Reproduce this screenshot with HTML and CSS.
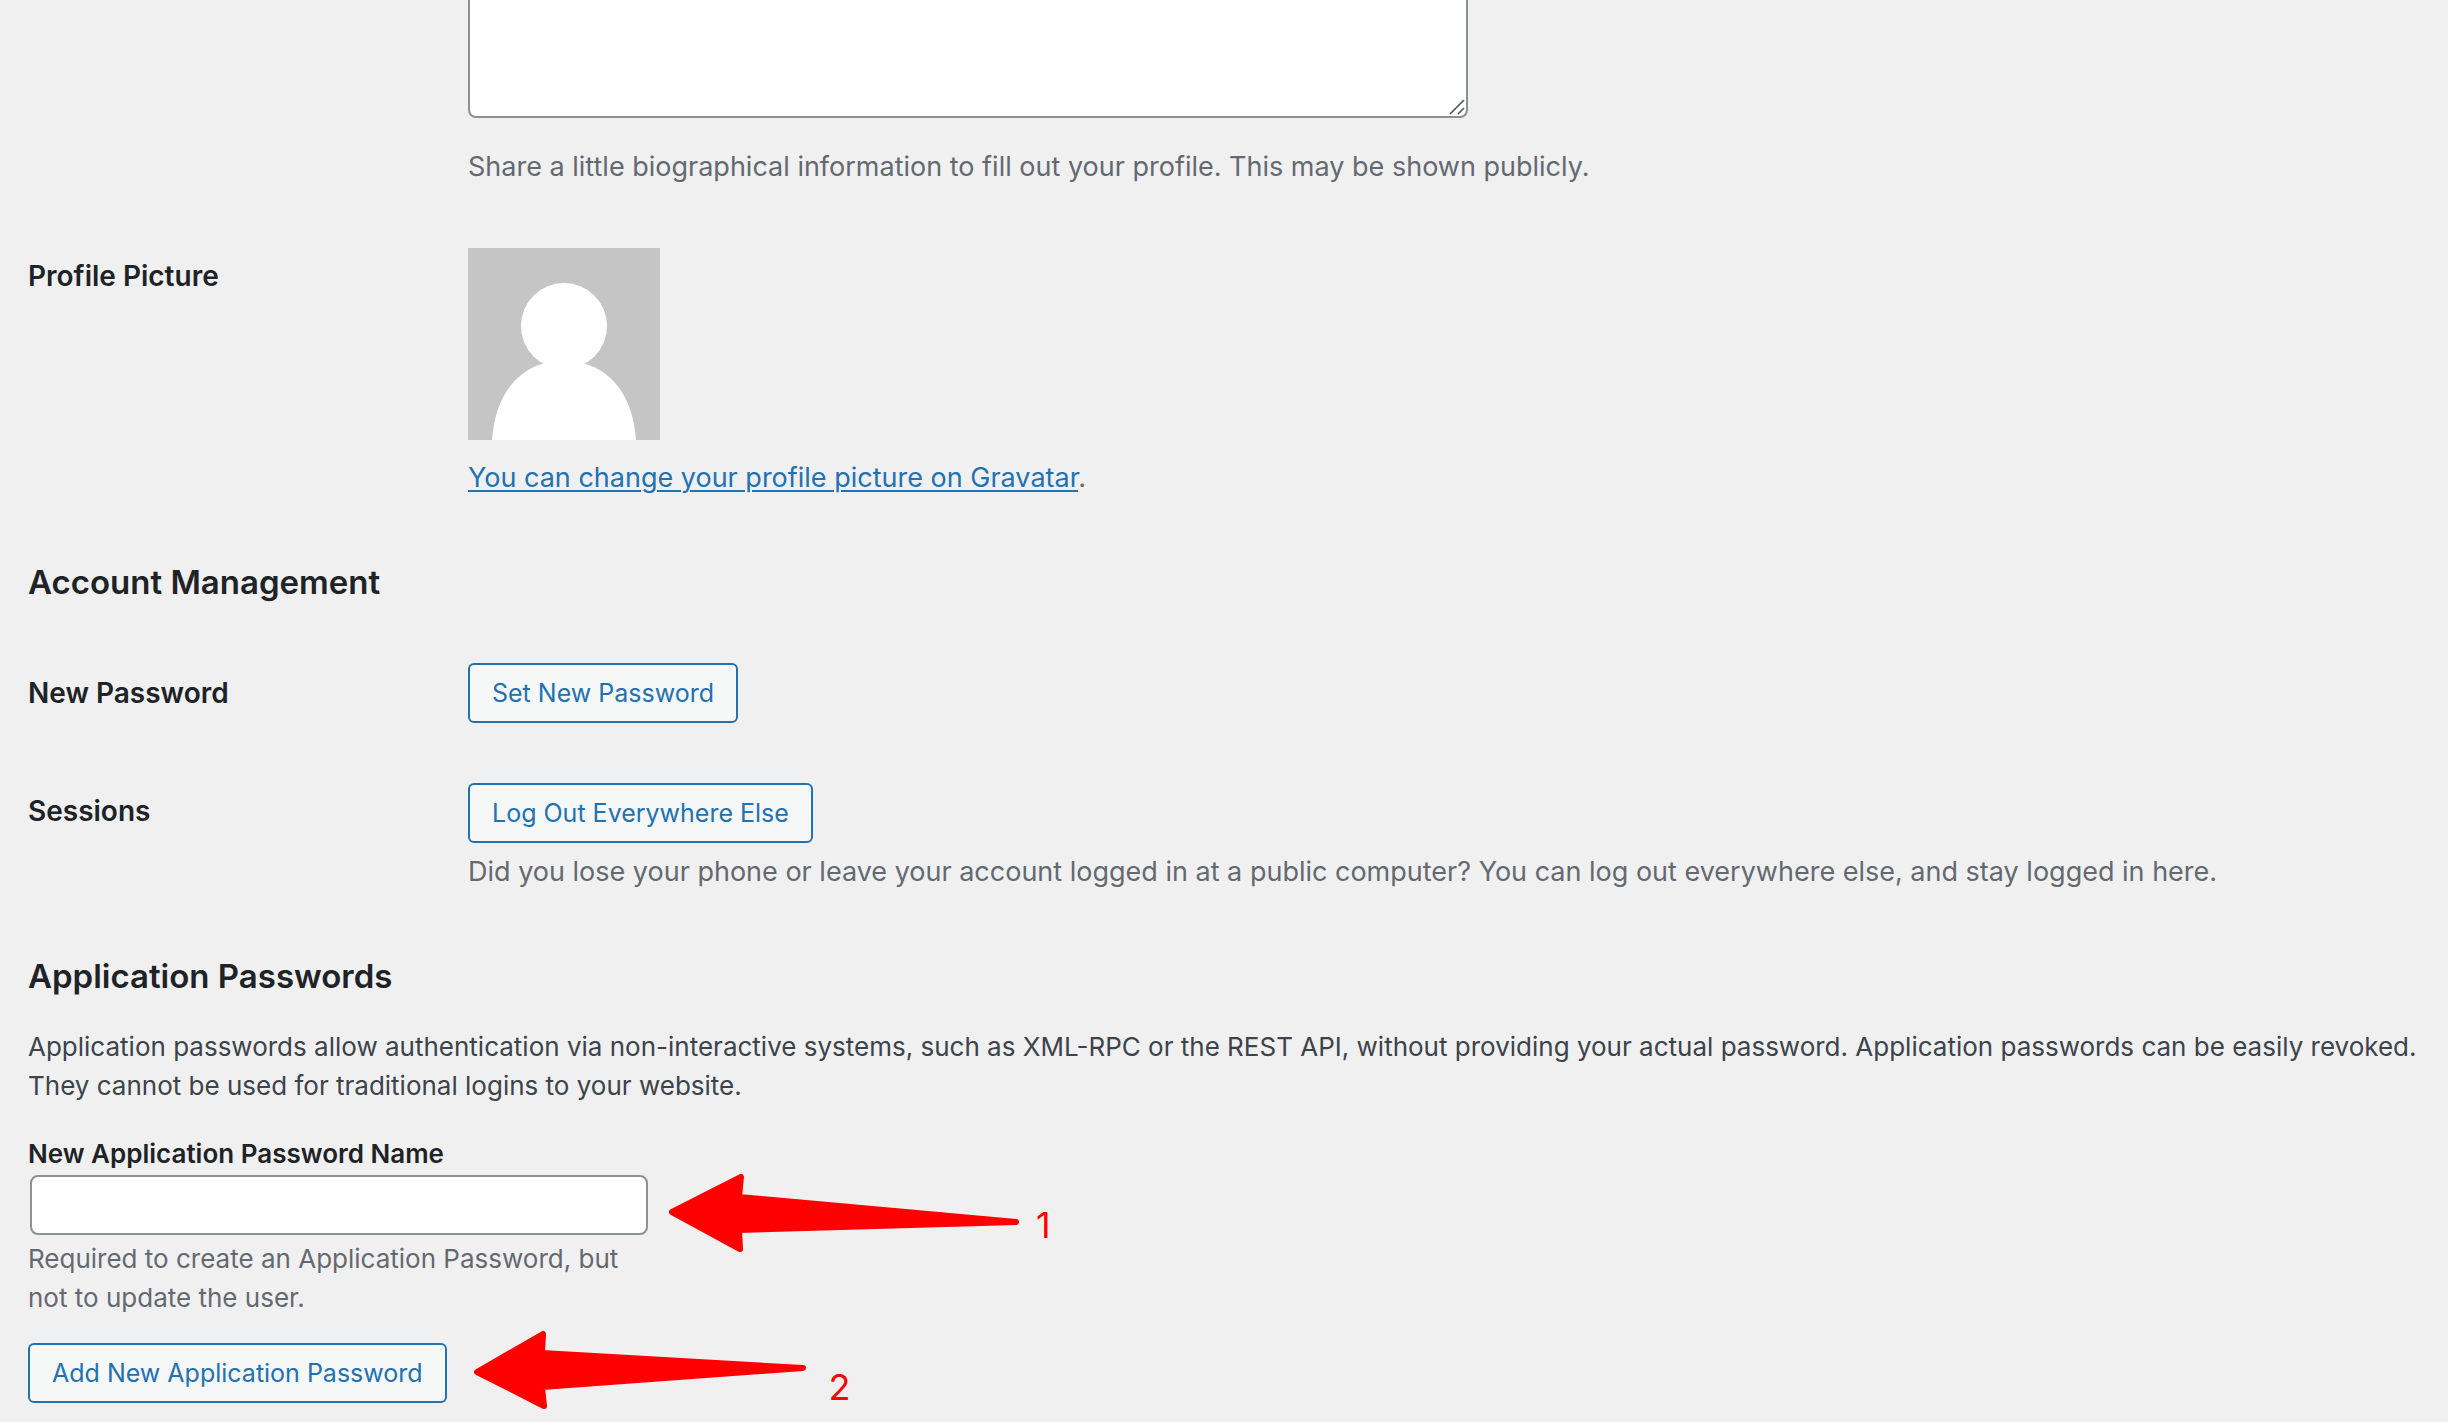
FILE: index.html
```html
<!DOCTYPE html>
<html lang="en">
<head>
<meta charset="utf-8">
<title>Profile</title>
<link rel="stylesheet" href="styles.css">
</head>
<body>
<form class="profile">
  <div class="row">
    <div></div>
    <div class="field">
      <div class="bio">
        <textarea class="bio-input" aria-label="Biographical Info"></textarea>
        <svg class="grip" viewBox="0 0 16 16" aria-hidden="true"><path d="M1 15 15 1M9 15l6-6" fill="none" stroke="#555" stroke-width="1.6"/></svg>
      </div>
      <p class="description bio-note">Share a little biographical information to fill out your profile. This may be shown publicly.</p>
    </div>
  </div>
  <div class="row">
    <div class="row-label">Profile Picture</div>
    <div class="field">
      <svg class="avatar" viewBox="0 0 192 192" role="img" aria-label="Avatar">
        <rect width="192" height="192" fill="#c5c5c5"/>
        <circle cx="96" cy="78" r="43" fill="#fff"/>
        <path d="M24 192C27 148 50 113 96 113s69 35 72 79z" fill="#fff"/>
      </svg>
      <p class="description avatar-note"><a href="#">You can change your profile picture on Gravatar</a>.</p>
    </div>
  </div>

  <h2>Account Management</h2>
  <div class="row row-center">
    <div class="row-label">New Password</div>
    <div class="field"><button type="button" class="button">Set New Password</button></div>
  </div>
  <div class="row">
    <div class="row-label">Sessions</div>
    <div class="field">
      <button type="button" class="button">Log Out Everywhere Else</button>
      <p class="description session-note">Did you lose your phone or leave your account logged in at a public computer? You can log out everywhere else, and stay logged in here.</p>
    </div>
  </div>

  <h2>Application Passwords</h2>
  <p class="intro">Application passwords allow authentication via non-interactive systems, such as XML-RPC or the REST API, without providing your actual password. Application passwords can be easily revoked. They cannot be used for traditional logins to your website.</p>
  <div class="app-field">
    <label for="app-name">New Application Password Name</label>
    <div class="anchor">
      <input type="text" id="app-name" class="text-input" aria-describedby="app-name-note">
      <div class="marker marker-name">
        <svg width="354" height="82" viewBox="0 0 354 82" aria-hidden="true"><path d="M4 39 73 4 71 24 348 49 71 57 72 76z"/></svg>
        <span class="marker-number">1</span>
      </div>
    </div>
    <p id="app-name-note" class="app-note">Required to create an Application Password, but not to update the user.</p>
  </div>
  <div class="anchor">
    <button type="button" class="button">Add New Application Password</button>
    <div class="marker marker-add">
      <svg width="344" height="82" viewBox="0 0 344 82" aria-hidden="true"><path d="M6 43 72 5 71 24 332 39 71 58 73 77z"/></svg>
      <span class="marker-number">2</span>
    </div>
  </div>
</form>
</body>
</html>
```

FILE: styles.css
```css
* {
  box-sizing: border-box;
}

body {
  margin: 0;
  background: #f0f0f1;
  color: #3c434a;
  font: 26px/39px Inter, "Liberation Sans", sans-serif;
}

p,
h2 {
  margin: 0;
}

a {
  color: #2271b1;
  text-decoration-thickness: 2px;
  text-underline-offset: 3px;
}

.profile {
  padding: 0 28px 19px;
}

.row {
  display: grid;
  grid-template-columns: 440px 1fr;
  margin-bottom: 60px;
}

.row-label {
  padding-top: 10px;
  color: #1d2327;
  font-size: 28px;
  font-weight: 600;
  line-height: 36px;
}

.row-center {
  align-items: center;
}

.row-center .row-label {
  padding-top: 0;
}

.description {
  color: #646970;
  font-size: 27px;
  line-height: 42px;
}

.bio {
  position: relative;
  max-width: 1000px;
}

.bio-input {
  display: block;
  width: 100%;
  height: 118px;
  padding: 4px 12px;
  border: 2px solid #8c8f94;
  border-top: 0;
  border-radius: 0 0 8px 8px;
  background: #fff;
  font: inherit;
  resize: none;
}

.grip {
  position: absolute;
  right: 3px;
  bottom: 3px;
  width: 16px;
  height: 16px;
}

.bio-note {
  margin-top: 28px;
}

.avatar {
  display: block;
  width: 192px;
  height: 192px;
}

.avatar-note {
  margin-top: 17px;
}

.session-note {
  margin-top: 8px;
}

h2 {
  margin-bottom: 58px;
  color: #1d2327;
  font-size: 33px;
  font-weight: 600;
  line-height: 46px;
}

.button {
  display: block;
  height: 60px;
  padding: 0 22px;
  border: 2px solid #2271b1;
  border-radius: 6px;
  background: #f6f7f7;
  color: #2271b1;
  font: inherit;
  font-size: 25px;
}

.intro {
  margin: -30px 0 29px;
}

.app-field {
  max-width: 622px;
  margin-bottom: 26px;
}

.app-field label {
  display: block;
  color: #1d2327;
  font-weight: 600;
}

.anchor {
  position: relative;
  width: fit-content;
}

.app-field .anchor {
  width: auto;
  padding: 2px;
}

.text-input {
  display: block;
  width: 100%;
  height: 60px;
  padding: 0 16px;
  border: 2px solid #8c8f94;
  border-radius: 8px;
  background: #fff;
  font: inherit;
}

.app-note {
  margin-top: 2px;
  color: #646970;
}

/* Numbered arrows that point at the controls */
.marker {
  position: absolute;
  left: 100%;
  display: flex;
  color: #f00;
}

.marker svg {
  flex: none;
  fill: #f00;
  stroke: #f00;
  stroke-width: 6;
  stroke-linejoin: round;
}

.marker-name {
  top: 0;
  margin-left: 18px;
}

.marker-add {
  top: -14px;
  margin-left: 24px;
}

.marker-number {
  padding: 28px 0 0 14px;
  font-size: 36px;
  line-height: 48px;
}

.marker-add .marker-number {
  padding-top: 34px;
}
```
